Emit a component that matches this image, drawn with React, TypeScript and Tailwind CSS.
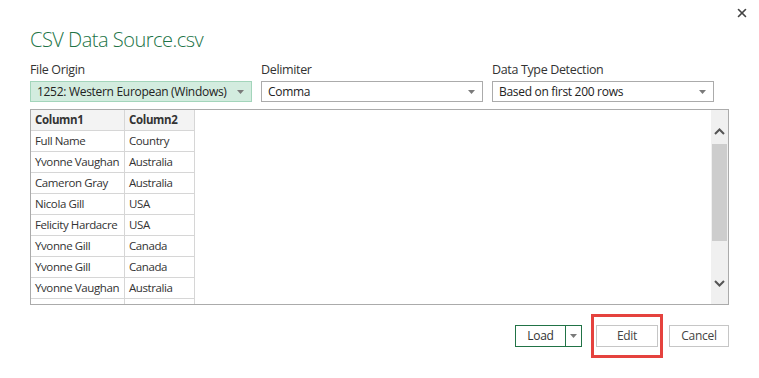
import { X } from "lucide-react";

const rows: [string, string][] = [
  ["Full Name", "Country"],
  ["Yvonne Vaughan", "Australia"],
  ["Cameron Gray", "Australia"],
  ["Nicola Gill", "USA"],
  ["Felicity Hardacre", "USA"],
  ["Yvonne Gill", "Canada"],
  ["Yvonne Gill", "Canada"],
  ["Yvonne Vaughan", "Australia"],
];

function Caret() {
  return (
    <svg width="7" height="4" viewBox="0 0 7 4" className="shrink-0">
      <path d="M0 0h7L3.5 4z" fill="#7a7a7a" />
    </svg>
  );
}

function Select({ label, value, active }: { label: string; value: string; active?: boolean }) {
  return (
    <div className="flex flex-col w-[222px]">
      <span className="text-[12.5px] tracking-[-0.35px] leading-[16px] text-[#333] h-[16px]">{label}</span>
      <div
        className={`mt-[3px] h-[21px] flex items-center justify-between pl-[6px] pr-[7px] border text-[12px] tracking-[-0.3px] text-[#222] whitespace-nowrap ${
          active ? "bg-[#d3ecdf] border-[#a3d5bb]" : "bg-white border-[#ababab]"
        }`}
      >
        <span className="leading-none">{value}</span>
        <Caret />
      </div>
    </div>
  );
}

export default function App() {
  return (
    <div
      className="w-[759px] h-[378px] bg-white flex flex-col overflow-hidden"
      style={{ fontFamily: '"Open Sans", "Noto Sans", sans-serif' }}
    >
      <div className="flex justify-end pt-[6px] pr-[10px] h-[22px]">
        <X size={14} strokeWidth={2.8} color="#444" />
      </div>

      <h1 className="pl-[30px] mt-[4px] text-[20px] tracking-[-0.5px] leading-[28px] font-light text-[#217346]">
        CSV Data Source.csv
      </h1>

      <div className="flex pl-[30px] mt-[8px] gap-[9px]">
        <Select label="File Origin" value="1252: Western European (Windows)" active />
        <Select label="Delimiter" value="Comma" />
        <Select label="Data Type Detection" value="Based on first 200 rows" />
      </div>

      <div className="ml-[30px] mt-[7px] w-[699px] h-[196px] border border-[#ababab] flex">
        <div className="flex-1 flex">
          <div className="flex flex-col">
            <div className="flex h-[21px] bg-[#f3f3f3] border-b border-[#d6d6d6] text-[11.5px] tracking-[-0.35px] font-bold text-[#333]">
              <div className="w-[94px] pl-[4px] flex items-center border-r border-[#d6d6d6]">Column1</div>
              <div className="w-[70px] pl-[4px] flex items-center border-r border-[#d6d6d6]">Column2</div>
            </div>
            {rows.map(([a, b], i) => (
              <div
                key={i}
                className="flex h-[21px] border-b border-[#d6d6d6] text-[11.5px] tracking-[-0.4px] text-[#333]"
              >
                <div className="w-[94px] pl-[4px] flex items-center border-r border-[#d6d6d6] whitespace-nowrap">
                  {a}
                </div>
                <div className="w-[70px] pl-[4px] flex items-center border-r border-[#d6d6d6]">{b}</div>
              </div>
            ))}
            <div className="flex flex-1">
              <div className="w-[94px] border-r border-[#d6d6d6]" />
              <div className="w-[70px] border-r border-[#d6d6d6]" />
            </div>
          </div>
        </div>
        <div className="w-[17px] bg-[#f0f0f0] flex flex-col items-center">
          <svg width="11" height="7" viewBox="0 0 11 7" className="mt-[18px]">
            <path d="M1 6l4.5-4.5L10 6" stroke="#555" strokeWidth="2" fill="none" />
          </svg>
          <div className="mt-[9px] w-[15px] h-[97px] bg-[#cdcdcd]" />
          <div className="flex-1" />
          <svg width="11" height="7" viewBox="0 0 11 7" className="mb-[17px]">
            <path d="M1 1l4.5 4.5L10 1" stroke="#555" strokeWidth="2" fill="none" />
          </svg>
        </div>
      </div>

      <div className="flex justify-end items-center mt-[9px] pr-[30px] text-[12px] tracking-[-0.3px] text-[#444]">
        <div className="flex h-[22px] border border-[#217346]">
          <div className="w-[49px] flex items-center justify-center text-[#333]">Load</div>
          <div className="w-[16px] border-l border-[#217346] flex items-center justify-center">
            <Caret />
          </div>
        </div>
        <div className="ml-[9px] border-[3px] border-[#e5423e] px-[2px] py-[8px]">
          <div className="w-[62px] h-[22px] border border-[#c6c6c6] flex items-center justify-center">Edit</div>
        </div>
        <div className="ml-[6px] w-[60px] h-[22px] border border-[#c6c6c6] flex items-center justify-center">
          Cancel
        </div>
      </div>
    </div>
  );
}
